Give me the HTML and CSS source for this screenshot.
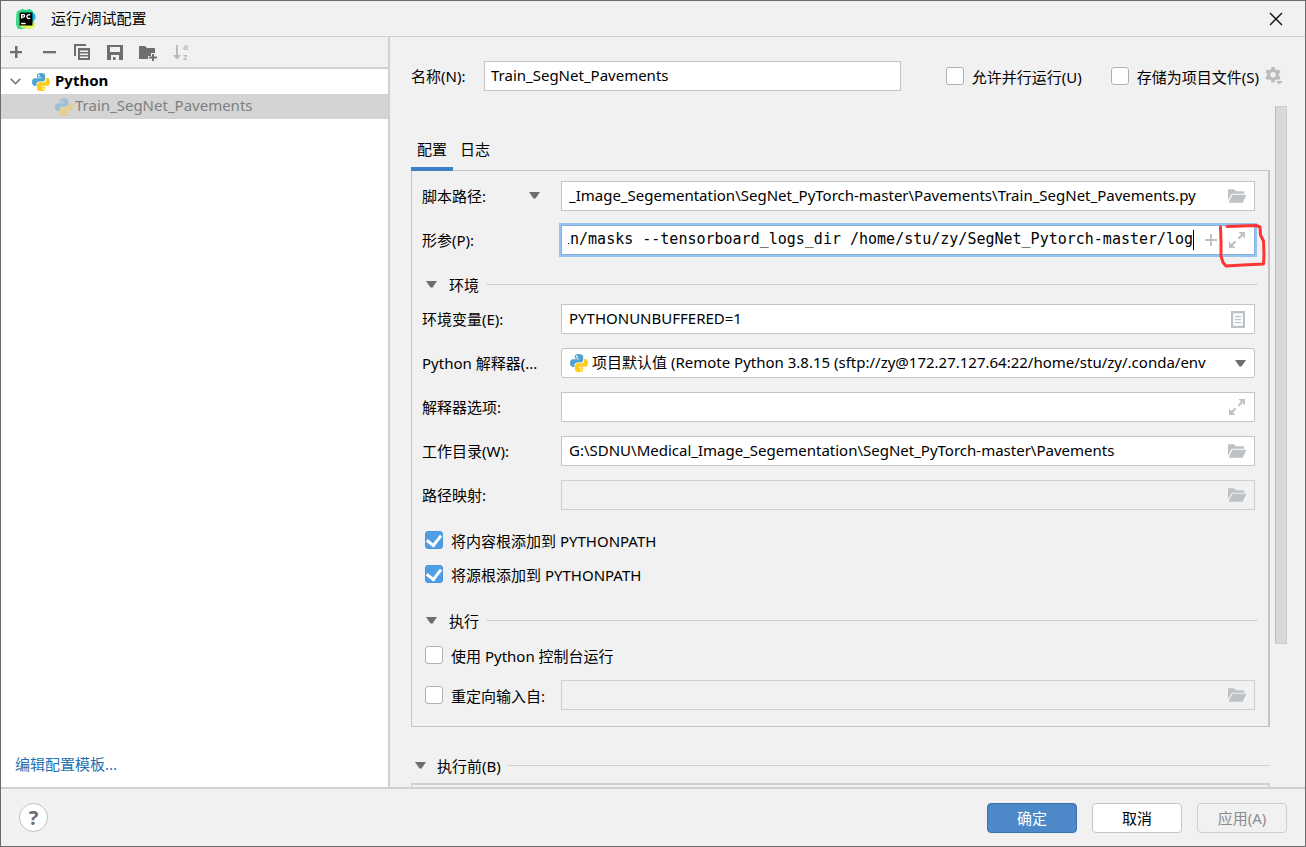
FILE: index.html
```html
<!DOCTYPE html>
<html lang="zh-CN">
<head>
<meta charset="utf-8">
<title>运行/调试配置</title>
<link rel="stylesheet" href="styles.css">
</head>
<body>
<svg class="defs" aria-hidden="true">
  <symbol id="python" viewBox="0 0 18 18">
    <path fill="#4ea3d0" d="M8.800 0C6 0 4.900 1 4.900 2.600v1.900h4.400v.8H3C1.100 5.300 0 6.800 0 9.100c0 2.400 1.200 3.800 2.700 3.800h1.700v-1.700C4.400 9.400 5.800 8.400 7.300 8.400h3.600c1.400 0 2.300-1 2.300-2.300V2.600C13.200 1 11.700 0 8.800 0zM6.900 1.600a.9.900 0 1 1 0 1.800.9.900 0 0 1 0-1.800z"/>
    <path fill="#ffcc1a" d="M9.200 18c2.800 0 3.900-1 3.900-2.600v-1.900H8.700v-.8H15c1.900 0 3-1.500 3-3.800 0-2.400-1.200-3.800-2.700-3.800h-1.200v1.700c0 1.800-1.400 2.500-2.900 2.500H7.400c-1.400 0-2.400 1-2.400 2.400v3.700C5 17 6.300 18 9.200 18zm1.900-1.600a.9.900 0 1 1 0-1.800.9.900 0 0 1 0 1.800z"/>
  </symbol>
  <symbol id="folder" viewBox="0 0 20 14">
    <path d="M0 0h6.500l2 2H17v2.500H3.800L0 12z"/>
    <path d="M4.600 5.600H19.500L15.500 14H.6z"/>
  </symbol>
  <symbol id="expand" viewBox="0 0 16 16">
    <path d="M9.500 0H16v6.500L13.600 4.100 10.200 7.500 8.700 6 12 2.600zM0 9.500 2.400 11.900 5.800 8.500 7.300 10 4 13.400 6.500 16H0z"/>
  </symbol>
  <symbol id="down" viewBox="0 0 11 7"><path d="M0 0h11L6.500 6.500h-2z"/></symbol>
</svg>
<div class="window">
  <header class="titlebar">
    <svg class="logo" viewBox="0 0 20 20" aria-hidden="true">
      <path fill="#21d789" d="M1 2.500 6 0l4 1 4-1 3.500 3L17 10l2 7-4 3-5-1-4 1H2L0 15z"/>
      <path fill="#07c3f2" d="m15 5 4-.5.800 4.500L17 13z"/>
      <path fill="#fcf84a" d="M5 1 3 6l1 10 11 .500L17 12l2 5-4 3-5-1.500L5 19l-4-4L2 5z"/>
      <path fill="#3ddc84" d="M.500 4 3 3v11l3 6H2l-2-5z"/>
      <path d="M3.500 3.500h13v13h-13z"/>
      <path fill="none" stroke="#fff" stroke-width="1.300" d="M5.700 9.500V5.600h1.700a1.200 1.200 0 0 1 0 2.500H5.700M14.300 6.200c-1.500-1.200-3.400-.4-3.400 1.400s1.900 2.600 3.400 1.300M5.200 14.500h4.500"/>
    </svg>
    <h1 class="title">运行/调试配置</h1>
    <button class="close" aria-label="关闭"><svg viewBox="0 0 12 12"><path d="m0 0 12 12M12 0 0 12"/></svg></button>
  </header>
  <main class="body">
    <aside class="sidebar">
      <div class="toolbar">
        <button class="tool" aria-label="添加"><svg viewBox="0 0 18 18"><path d="M8 3h2.500v5H15v2.300h-4.500V15H8v-4.700H3V8h5z"/></svg></button>
        <button class="tool" aria-label="移除"><svg viewBox="0 0 18 18"><path d="M3 8h13v2.300H3z"/></svg></button>
        <button class="tool" aria-label="复制"><svg viewBox="0 0 18 18"><path d="M1 1h12v2H3v10H1z"/><path fill-rule="evenodd" d="M5 5h12v12H5zM7 7.500V9h8V7.500zm0 3V12h8v-1.500zm0 3V15h8v-1.500z"/></svg></button>
        <button class="tool" aria-label="保存"><svg viewBox="0 0 18 18"><path fill-rule="evenodd" d="M1 2h16v15H1zM4 4v5h10V4zM5 12v5h8v-5z"/><path d="M7 14h2.500v3H7z"/></svg></button>
        <button class="tool" aria-label="新建文件夹"><svg viewBox="0 0 18 18"><path d="M0 3h6l2 2h8v5h-4v3H9v3H0z"/><path d="M13 11h2v2.500h3v2h-3V18h-2v-2.500h-3v-2h3z"/></svg></button>
        <button class="tool tool-off" aria-label="排序" disabled><svg viewBox="0 0 18 18"><path d="M4 2h2v10h3l-4 4.500L1 12h3z"/><text x="11" y="7">a</text><text x="11" y="17">z</text></svg></button>
      </div>
      <nav class="tree">
        <div class="node"><svg class="chevron" viewBox="0 0 11 7"><path d="m.7.7 4.800 5 4.800-5"/></svg><svg class="py"><use href="#python"/></svg><b class="node-text">Python</b></div>
        <div class="node node-selected"><svg class="py"><use href="#python"/></svg><span class="node-text">Train_SegNet_Pavements</span></div>
      </nav>
      <a class="link" href="#templates">编辑配置模板...</a>
    </aside>
    <section class="editor">
      <div class="namebar">
        <label class="name-label" for="name">名称(N):</label>
        <input class="field name" id="name" value="Train_SegNet_Pavements">
        <span class="options">
          <label class="check"><input type="checkbox">允许并行运行(U)</label>
          <label class="check"><input type="checkbox">存储为项目文件(S)</label>
          <svg class="gear" viewBox="0 0 18 18" aria-hidden="true"><path fill-rule="evenodd" d="M6.500 0h3l.5 2.300 1.700 1 2.300-.7 1.500 2.600-1.700 1.600v2l1.700 1.500-1.500 2.600-2.300-.7-1.700 1-.5 2.300h-3L6 13.200l-1.700-1-2.300.7-1.500-2.600 1.700-1.500v-2L.5 5.200 2 2.600l2.300.7 1.700-1zM8 5.100a2.700 2.700 0 1 0 0 5.400 2.700 2.700 0 0 0 0-5.400z"/><path d="M11 14h7l-3.500 3.500z"/></svg>
        </span>
      </div>
      <div class="scroller">
        <div class="content">
          <div class="tabs"><button class="tab tab-on">配置</button><button class="tab">日志</button></div>
          <div class="panel">
            <div class="rows">
              <div class="row">
                <label class="label" for="script">脚本路径: <svg class="tri"><use href="#down"/></svg></label>
                <div class="box"><input class="field" id="script" value="_Image_Segementation\SegNet_PyTorch-master\Pavements\Train_SegNet_Pavements.py"><svg class="icon folder"><use href="#folder"/></svg></div>
              </div>
              <div class="row">
                <label class="label" for="params">形参(P):</label>
                <div class="box box-focus"><input class="field mono scroll-end" id="params" value="in/masks --tensorboard_logs_dir /home/stu/zy/SegNet_Pytorch-master/log"><i class="caret"></i>
                  <svg class="icon plus" viewBox="0 0 12 12"><path d="M5 0h2v5h5v2H7v5H5V7H0V5h5z"/></svg><svg class="icon expand"><use href="#expand"/></svg>
                  <svg class="mark" viewBox="0 0 50 46" aria-hidden="true"><path d="M10 4.500 25 4l14-.5 4 1.500.5 8 3 6 .5 13-.5 10L26 43l-17 1-3-3.500L4 34V20L3.500 5"/></svg></div>
              </div>
            </div>
            <h2 class="head"><svg class="tri"><use href="#down"/></svg>环境</h2>
            <div class="rows">
              <div class="row">
                <label class="label" for="env">环境变量(E):</label>
                <div class="box"><input class="field" id="env" value="PYTHONUNBUFFERED=1"><svg class="icon doc" viewBox="0 0 14 17"><path fill-rule="evenodd" d="M0 0h14v17H0zM2.200 2.200v12.600h9.600V2.200z"/><path d="M4 5h6v1.200H4zm0 3h6v1.200H4zm0 3h6v1.200H4z"/></svg></div>
              </div>
              <div class="row">
                <label class="label" for="interp">Python 解释器(...</label>
                <div class="box"><svg class="py py-select"><use href="#python"/></svg><select class="field select" id="interp"><option>项目默认值 (Remote Python 3.8.15 (sftp://zy@172.27.127.64:22/home/stu/zy/.conda/env</option></select><svg class="icon tri"><use href="#down"/></svg></div>
              </div>
              <div class="row">
                <label class="label" for="opts">解释器选项:</label>
                <div class="box"><input class="field" id="opts"><svg class="icon expand"><use href="#expand"/></svg></div>
              </div>
              <div class="row">
                <label class="label" for="cwd">工作目录(W):</label>
                <div class="box"><input class="field" id="cwd" value="G:\SDNU\Medical_Image_Segementation\SegNet_PyTorch-master\Pavements"><svg class="icon folder"><use href="#folder"/></svg></div>
              </div>
              <div class="row">
                <label class="label" for="maps">路径映射:</label>
                <div class="box"><input class="field" id="maps" disabled><svg class="icon folder"><use href="#folder"/></svg></div>
              </div>
            </div>
            <div class="checks">
              <label class="check"><input type="checkbox" checked>将内容根添加到 PYTHONPATH</label>
              <label class="check"><input type="checkbox" checked>将源根添加到 PYTHONPATH</label>
            </div>
            <h2 class="head"><svg class="tri"><use href="#down"/></svg>执行</h2>
            <div class="row console"><label class="check"><input type="checkbox">使用 Python 控制台运行</label></div>
            <div class="row">
              <label class="check check-label"><input type="checkbox">重定向输入自:</label>
              <div class="box"><input class="field" aria-label="重定向输入自" disabled><svg class="icon folder"><use href="#folder"/></svg></div>
            </div>
          </div>
          <h2 class="head head-outer"><svg class="tri"><use href="#down"/></svg>执行前(B)</h2>
          <div class="before"></div>
        </div>
        <div class="thumb"></div>
      </div>
    </section>
  </main>
  <footer class="footer">
    <button class="help" aria-label="帮助">?</button>
    <button class="btn btn-primary">确定</button>
    <button class="btn">取消</button>
    <button class="btn" disabled>应用(A)</button>
  </footer>
</div>
<script src="script.js"></script>
</body>
</html>
```
FILE: styles.css
```css
* { box-sizing: border-box; }
body { margin: 0; }
body, button, input, select {
  font-family: "Noto Sans", "Noto Sans CJK SC", sans-serif;
  font-size: 15px;
  color: #000;
}
button { padding: 0; border: 0; background: none; }
.defs { display: none; }

.window {
  display: flex;
  flex-direction: column;
  height: 100vh;
  border: 1px solid #6b6a6c;
  background: #f1f1f1;
}
.titlebar {
  display: flex;
  align-items: center;
  flex: none;
  height: 36px;
  padding: 0 23px 0 15px;
  border-bottom: 1px solid #d0d0d0;
}
.logo { width: 20px; height: 20px; margin-right: 15px; }
.title { flex: 1; margin: 0; padding-bottom: 2px; font-size: 15px; font-weight: 400; }
.close svg { display: block; width: 12px; height: 12px; overflow: visible; fill: none; stroke: #111; stroke-width: 1.400; }

.body { display: flex; flex: 1; min-height: 0; }
.sidebar {
  display: flex;
  flex-direction: column;
  flex: none;
  width: 389px;
  border-right: 2px solid #d0d0d0;
  background: #fff;
}
.toolbar {
  display: flex;
  align-items: center;
  gap: 15px;
  flex: none;
  height: 32px;
  padding-left: 6px;
  border-bottom: 2px solid #d0d0d0;
  background: #f1f1f1;
}
.tool svg { display: block; width: 18px; height: 18px; overflow: visible; fill: #6e6e6e; }
.tool-off svg { fill: #bababa; font: bold 9px "Liberation Sans", sans-serif; }
.tree { flex: 1; }
.node { display: flex; align-items: center; height: 25px; padding-left: 9px; }
.node-text { padding-bottom: 4px; }
.chevron { width: 11px; height: 7px; margin-right: 11px; fill: none; stroke: #6e6e6e; stroke-width: 1.500; }
.py { flex: none; width: 18px; height: 18px; margin-right: 5px; }
.node-selected { padding-left: 54px; background: #d4d4d4; color: #808080; }
.node-selected .py { margin-right: 2px; opacity: .4; }
.link { padding: 0 14px 13px; line-height: 20px; color: #2470b3; text-decoration: none; }

.editor { display: flex; flex-direction: column; flex: 1; min-width: 0; padding: 24px 18px 0 21px; }
.namebar { display: flex; align-items: center; flex: none; height: 30px; }
.name-label { width: 73px; padding-bottom: 2px; }
.field {
  flex: 1;
  width: 100%;
  min-width: 0;
  height: 30px;
  padding: 0 7px 2px;
  border: 1px solid #c4c4c4;
  border-radius: 0;
  outline: 0;
  background: #fff;
}
.name { padding-left: 6px; }
.options { display: flex; align-items: center; margin-left: 45px; padding-right: 4px; }
.options .check + .check { margin-left: 29px; }
.gear { width: 18px; height: 18px; margin-left: 6px; fill: #bcbcbc; }
.check { display: flex; align-items: center; white-space: nowrap; }
.check input {
  appearance: none;
  flex: none;
  display: grid;
  place-items: center;
  width: 18px;
  height: 18px;
  margin: 0 8px 0 0;
  border: 1px solid #b0b0b0;
  border-radius: 3px;
  background: #fff;
}
.check input:checked { border-color: #4a95dc; background: #4f9ee3; }
.check input:checked::before {
  content: "";
  width: 7px;
  height: 11px;
  margin-bottom: 3px;
  border: solid #fff;
  border-width: 0 3px 3px 0;
  rotate: 38deg;
}

.scroller { display: flex; align-items: flex-start; gap: 5px; flex: 1; min-height: 0; margin-top: 15px; }
.content { flex: 1; min-width: 0; height: 100%; overflow: hidden; }
.thumb { flex: none; width: 12px; height: 79%; border: 1px solid #cdcdcd; border-left-color: #bdbdbd; background: #d9d9d9; }
.tabs { display: flex; height: 65px; padding-top: 23px; }
.tab { width: 42px; border-bottom: 4px solid transparent; }
.tab-on { border-color: #3d80c7; }
.tab + .tab { margin-left: 1px; }
.panel { margin-top: -1px; padding: 10px 13px 16px 10px; border: 1px solid #c4c4c4; border-right-width: 2px; }
.rows { display: flex; flex-direction: column; gap: 14px; }
.row { display: flex; align-items: center; height: 30px; }
.label { display: flex; align-items: center; flex: none; width: 139px; padding-bottom: 2px; }
.tri { flex: none; width: 11px; height: 7px; fill: #6e6e6e; }
.label .tri { margin-left: 43px; }
.box { position: relative; display: flex; align-items: center; flex: 1; min-width: 0; }
.icon { position: absolute; right: 9px; fill: #bcc2c6; }
.icon.folder { right: 8px; width: 19px; height: 14px; }
.icon.expand { right: 10px; width: 16px; height: 16px; }
.icon.doc { right: 10px; width: 14px; height: 17px; }
.icon.plus { right: 37px; width: 12px; height: 12px; }
.icon.tri { fill: #6e6e6e; }
.box-focus {
  height: 30px;
  padding: 0 60px 0 6px;
  border: 1px solid #87afda;
  background: #fff;
  box-shadow: 0 0 0 2px #97c3f3;
}
.box-focus .field { height: 28px; padding: 0 0 2px; border: 0; }
.box-focus .icon.expand { right: 9px; }
.mono { font-family: "DejaVu Sans Mono", monospace; }
.caret { flex: none; width: 1px; height: 20px; background: #000; }
.mark { position: absolute; right: -13px; top: -4px; width: 50px; height: 46px; fill: none; stroke: #fd3434; stroke-width: 3; stroke-linecap: round; stroke-linejoin: round; }
.py-select { position: absolute; left: 9px; }
.select { appearance: none; padding: 0 28px 2px 30px; border-radius: 3px; text-overflow: clip; }
.field:disabled { border-color: #d0d0d0; background: #f1f1f1; }

.head {
  display: flex;
  align-items: center;
  height: 49px;
  margin: 0 -3px 0 0;
  padding: 9px 0 0 4px;
  font-size: 15px;
  font-weight: 400;
}
.head .tri { margin-right: 12px; }
.head::after { content: ""; flex: 1; height: 1px; margin-left: 7px; background: #d0d0d0; }
.checks { margin-top: 13px; padding-left: 3px; }
.checks .check { height: 34px; }
.console { margin-bottom: 10px; padding-left: 3px; }
.check-label { flex: none; width: 139px; padding-left: 3px; }
.head-outer { height: 56px; margin: 0; padding: 20px 0 0 4px; }
.head-outer .tri { margin-right: 11px; }
.before { height: 80px; border: 2px solid #d0d0d0; border-left-width: 1px; }

.footer {
  display: flex;
  align-items: center;
  gap: 15px;
  flex: none;
  height: 59px;
  padding: 0 18px;
  border-top: 2px solid #d0d0d0;
}
.help { width: 29px; height: 29px; margin-right: auto; border: 1px solid #c0c0c0; border-radius: 50%; background: #fff; color: #6e6e6e; font-size: 20px; font-weight: 700; line-height: 27px; }
.btn { width: 90px; height: 30px; border: 1px solid #c4c4c4; border-radius: 4px; background: #fff; }
.btn-primary { border-color: #3b74b4; background: #4d89c8; color: #fff; }
.btn:disabled { border-color: #cfcfcf; background: #f1f1f1; color: #8c8c8c; }
```
FILE: script.js
```js
for (const input of document.querySelectorAll('.scroll-end')) {
  input.scrollLeft = input.scrollWidth;
}
```
